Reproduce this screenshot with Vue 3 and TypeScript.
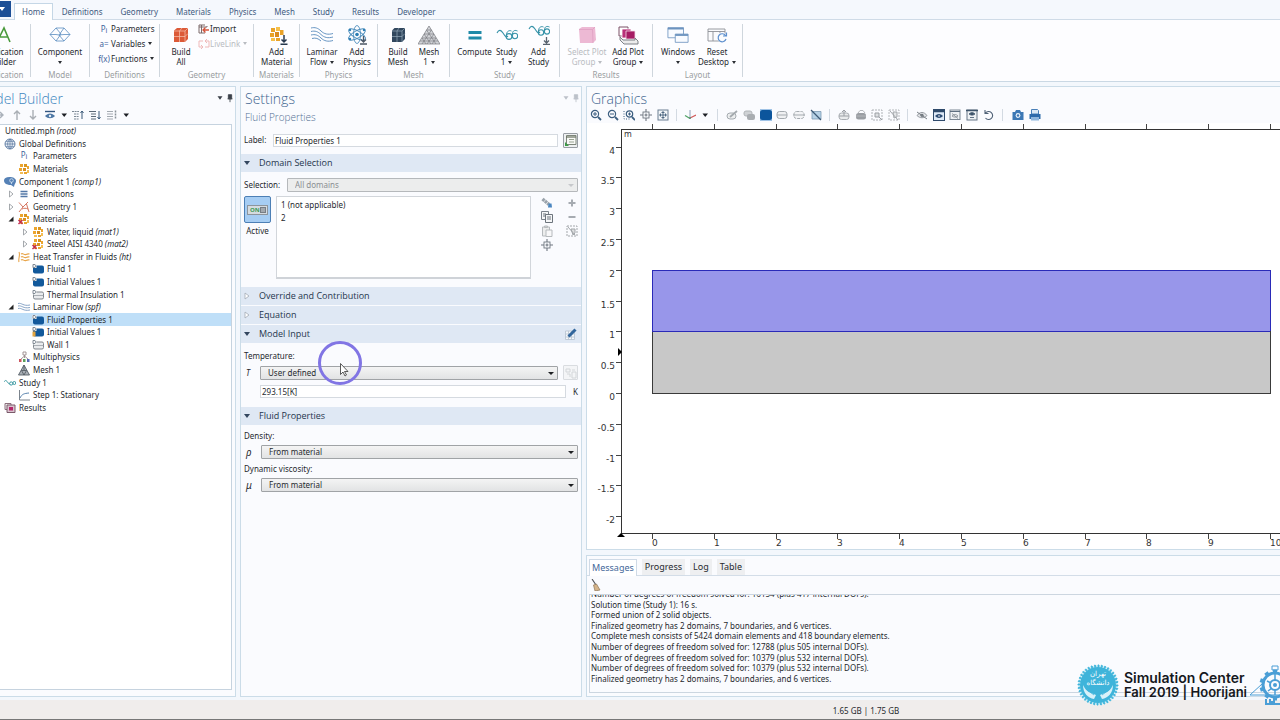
<script setup lang="ts">
import { ref } from 'vue'

interface Tool { icon: string; lines: string[]; caret?: boolean; disabled?: boolean }
interface SmallTool { icon?: string; glyph?: string; sub?: string; text: string; caret?: boolean; disabled?: boolean }
interface Group { name: string; id: string; tools: Tool[]; small?: SmallTool[] }
interface Node { level: number; icon: string; text: string; tag?: string; state?: 'open' | 'closed'; selected?: boolean }

const tabs = ['Home', 'Definitions', 'Geometry', 'Materials', 'Physics', 'Mesh', 'Study', 'Results', 'Developer']

const groups: Group[] = [
  { name: 'Application', id: 'application', tools: [{ icon: 'app', lines: ['Application', 'Builder'] }] },
  { name: 'Model', id: 'model', tools: [{ icon: 'component', lines: ['Component', ''], caret: true }] },
  {
    name: 'Definitions', id: 'definitions', tools: [],
    small: [
      { glyph: 'P', sub: 'i', text: 'Parameters' },
      { glyph: 'a=', text: 'Variables', caret: true },
      { glyph: 'f(x)', text: 'Functions', caret: true },
    ],
  },
  {
    name: 'Geometry', id: 'geometry', tools: [{ icon: 'buildall', lines: ['Build', 'All'] }],
    small: [
      { icon: 'import', text: 'Import' },
      { icon: 'livelink', text: 'LiveLink', caret: true, disabled: true },
    ],
  },
  { name: 'Materials', id: 'materials', tools: [{ icon: 'addmat', lines: ['Add', 'Material'] }] },
  {
    name: 'Physics', id: 'physics',
    tools: [{ icon: 'laminar', lines: ['Laminar', 'Flow'], caret: true }, { icon: 'addphys', lines: ['Add', 'Physics'] }],
  },
  {
    name: 'Mesh', id: 'mesh',
    tools: [{ icon: 'buildmesh', lines: ['Build', 'Mesh'] }, { icon: 'mesh', lines: ['Mesh', '1'], caret: true }],
  },
  {
    name: 'Study', id: 'study',
    tools: [
      { icon: 'compute', lines: ['Compute'] },
      { icon: 'study', lines: ['Study', '1'], caret: true },
      { icon: 'addstudy', lines: ['Add', 'Study'] },
    ],
  },
  {
    name: 'Results', id: 'results',
    tools: [
      { icon: 'selplot', lines: ['Select Plot', 'Group'], caret: true, disabled: true },
      { icon: 'addplot', lines: ['Add Plot', 'Group'], caret: true },
    ],
  },
  {
    name: 'Layout', id: 'layout',
    tools: [{ icon: 'windows', lines: ['Windows', ''], caret: true }, { icon: 'reset', lines: ['Reset', 'Desktop'], caret: true }],
  },
]

const nodes: Node[] = [
  { level: 0, icon: 'root', text: 'Untitled.mph', tag: '(root)' },
  { level: 1, icon: 'globe', text: 'Global Definitions' },
  { level: 2, icon: 'pi', text: 'Parameters' },
  { level: 2, icon: 'mat', text: 'Materials' },
  { level: 1, icon: 'comp', text: 'Component 1', tag: '(comp1)' },
  { level: 2, icon: 'defs', text: 'Definitions', state: 'closed' },
  { level: 2, icon: 'geom', text: 'Geometry 1', state: 'closed' },
  { level: 2, icon: 'matx', text: 'Materials', state: 'open' },
  { level: 3, icon: 'mat', text: 'Water, liquid', tag: '(mat1)', state: 'closed' },
  { level: 3, icon: 'matx', text: 'Steel AISI 4340', tag: '(mat2)', state: 'closed' },
  { level: 2, icon: 'heat', text: 'Heat Transfer in Fluids', tag: '(ht)', state: 'open' },
  { level: 3, icon: 'dom', text: 'Fluid 1' },
  { level: 3, icon: 'dom', text: 'Initial Values 1' },
  { level: 3, icon: 'bnd', text: 'Thermal Insulation 1' },
  { level: 2, icon: 'flow', text: 'Laminar Flow', tag: '(spf)', state: 'open' },
  { level: 3, icon: 'dom', text: 'Fluid Properties 1', selected: true },
  { level: 3, icon: 'domy', text: 'Initial Values 1' },
  { level: 3, icon: 'bnd', text: 'Wall 1' },
  { level: 2, icon: 'multi', text: 'Multiphysics' },
  { level: 2, icon: 'meshs', text: 'Mesh 1' },
  { level: 1, icon: 'studys', text: 'Study 1' },
  { level: 2, icon: 'step', text: 'Step 1: Stationary' },
  { level: 1, icon: 'results', text: 'Results' },
]

const viewTools = [
  { id: 'five', icons: ['zin', 'zout', 'zbox', 'target', 'extents'] },
  { id: 'axis', icons: ['axis', 'caret'] },
  { id: 'six', icons: ['edit', 'copies', 'domsel', 'bndsel', 'edgesel', 'nosel'] },
  { id: 'four', icons: ['cut', 'printg', 'boxsel', 'boxdes'] },
  { id: 'five', icons: ['hide', 'eyebox', 'eyewin', 'eyetop', 'resetv'] },
  { id: 'two', icons: ['camera', 'printer'] },
]

const messages = [
  'Number of degrees of freedom solved for: 16154 (plus 417 internal DOFs).',
  'Solution time (Study 1): 16 s.',
  'Formed union of 2 solid objects.',
  'Finalized geometry has 2 domains, 7 boundaries, and 6 vertices.',
  'Complete mesh consists of 5424 domain elements and 418 boundary elements.',
  'Number of degrees of freedom solved for: 12788 (plus 505 internal DOFs).',
  'Number of degrees of freedom solved for: 10379 (plus 532 internal DOFs).',
  'Number of degrees of freedom solved for: 10379 (plus 532 internal DOFs).',
  'Finalized geometry has 2 domains, 7 boundaries, and 6 vertices.',
]

const originX = 65
const originY = 270
const unit = 61.8
const xTicks = Array.from({ length: 11 }, (_, i) => ({ label: String(i), x: Math.round(originX + i * unit) }))
const yTicks = [4, 3.5, 3, 2.5, 2, 1.5, 1, 0.5, 0, -0.5, -1, -1.5, -2].map((v) => ({
  label: String(v),
  y: Math.round(originY - v * 61.6),
}))

const label = ref('Fluid Properties 1')
const temperature = ref('293.15[K]')
const petals = Array.from({ length: 36 }, (_, i) => i * 10)
const teeth = Array.from({ length: 10 }, (_, i) => i * 36)
</script>

<template>
  <svg class="defs" aria-hidden="true">
    <symbol id="i-app" viewBox="0 0 20 20"><path d="M4 17 11 3l6 14M7 12h8" fill="none" stroke="#4a9a3c" stroke-width="1.6" /></symbol>
    <symbol id="i-component" viewBox="0 0 20 20"><path d="M0 9.500 6 3h8l6 6.500-6 6.500H6zM6 3l5 6-5 7M14 3 9 10l5 6M0 9.500h6l3 .5 5-.5h6" fill="none" stroke="#5b8dc0" stroke-width=".8" /></symbol>
    <symbol id="i-buildall" viewBox="0 0 20 20"><path d="M3 5.500 6 3h11v11l-3 3H3z" fill="#dc5a38" /><path d="M3 6h11v11M14 6l3-3M8.500 6v11M3 11.500h11l3-3M8.500 6 11 3" stroke="#f7c4b2" stroke-width=".7" fill="none" /></symbol>
    <symbol id="i-import" viewBox="0 0 12 12"><path d="M7 2H1v8h6M3.500 2v8M1 4h8V3" fill="none" stroke="#7d6a6a" stroke-width="1" /><path d="M11 7H5M7.500 4.500 5 7l2.500 2.500" fill="none" stroke="#d4543c" stroke-width="1.300" /></symbol>
    <symbol id="i-livelink" viewBox="0 0 12 12"><path d="M5 3H1v6h3M3 7l2 2-2 2M7 9h4V3H8M9 1 7 3l2 2" fill="none" stroke="#efb9b9" stroke-width="1" /></symbol>
    <symbol id="i-addmat" viewBox="0 0 20 20"><g fill="#e9a227"><rect x="4" y="3" width="4" height="4" /><rect x="9" y="2" width="4" height="4" fill="#f5c04a" /><rect x="3" y="8" width="4" height="4" /><rect x="8" y="7" width="4" height="5" fill="#d98a1c" /><rect x="13" y="5" width="3.500" height="5" /><rect x="4" y="13" width="4" height="3" fill="#f5c04a" /><rect x="9" y="13" width="4" height="3" /></g><path d="M17 10v7M14.500 14.500 17 17l2.500-2.500M13.500 19.200h7" stroke="#27384d" stroke-width="1.500" fill="none" /></symbol>
    <symbol id="i-laminar" viewBox="0 0 22 20"><path d="M0 3c4-1 7 0 10 3s7 4 12 2.500M0 6.500c4-1 7 0 10 3s7 4 12 2.500M0 10c4-1 7 0 10 3s7 4 12 2.500M1 13.500c4-1 6 0 9 2.500" fill="none" stroke="#5689bb" stroke-width=".9" /></symbol>
    <symbol id="i-addphys" viewBox="0 0 20 20"><g fill="none" stroke="#4f8fbd" stroke-width=".9"><ellipse cx="10" cy="9.500" rx="9.500" ry="3.600" transform="rotate(30 10 9.500)" /><ellipse cx="10" cy="9.500" rx="9.500" ry="3.600" transform="rotate(-30 10 9.500)" /><ellipse cx="10" cy="9.500" rx="3.500" ry="9" /></g><g fill="#2b7db4"><circle cx="10" cy="9.500" r="1.800" /><circle cx="3" cy="5" r="1.200" /><circle cx="17" cy="5" r="1.200" /><circle cx="3" cy="14" r="1.200" /></g><path d="M16.500 11v6M14 14.500l2.500 2.500 2.500-2.500M13 19h7" stroke="#4c5765" stroke-width="1.300" fill="none" /></symbol>
    <symbol id="i-buildmesh" viewBox="0 0 20 20"><path d="M4 5.500 6.500 3H17v11l-3 3H4z" fill="#31475e" /><path d="M4 6h10v11M14 6l3-3M9 6v11M4 11.500h10l3-3M9 6l2-3" stroke="#93a7b8" stroke-width=".7" fill="none" /></symbol>
    <symbol id="i-mesh" viewBox="0 0 22 20"><path d="M11 1 22 19H0z" fill="#d3d5d9" stroke="#85878c" stroke-width=".8" /><path d="M8.500 5h5M6 9h10M4 13h14M2 16h18M4 13l4 6M6 9l7 10M8.500 5 18 19M18 13l-4 6M16 9 9 19M13.500 5 4 19" fill="none" stroke="#7b7d83" stroke-width=".7" /></symbol>
    <symbol id="i-compute" viewBox="0 0 20 20"><path d="M3.500 6h13v3h-13zM3.500 11.500h13v3h-13z" fill="#1f8aa8" /></symbol>
    <symbol id="i-study" viewBox="0 0 22 20"><path d="M1 8c2-4 4-3 6 0s3 5 5 3" fill="none" stroke="#3592a8" stroke-width="1.100" /><circle cx="13" cy="11.500" r="2.900" fill="none" stroke="#3592a8" stroke-width="1.100" /><circle cx="19" cy="11" r="2.700" fill="none" stroke="#3592a8" stroke-width="1.100" /><path d="M10.500 10c0-4 3-5 5-4M16.500 9c0-4 3-4 5-3" fill="none" stroke="#3592a8" stroke-width="1" /></symbol>
    <symbol id="i-addstudy" viewBox="0 0 22 20"><path d="M1 4c2-4 4-3 6 0s3 5 5 3" fill="none" stroke="#3592a8" stroke-width="1.100" /><circle cx="13" cy="7.500" r="2.700" fill="none" stroke="#3592a8" stroke-width="1.100" /><circle cx="19" cy="6.500" r="2.600" fill="none" stroke="#3592a8" stroke-width="1.100" /><path d="M10.500 6c0-4 3-5 5-4M16.500 5c0-4 3-4 5-3" fill="none" stroke="#3592a8" stroke-width="1" /><path d="M18.500 12v6M16 15.500l2.500 2.500 2.500-2.500M15 19.300h7" stroke="#59636f" stroke-width="1.300" fill="none" /></symbol>
    <symbol id="i-selplot" viewBox="0 0 20 20"><path d="M2 4 5 2h13l1 13-3 3H3z" fill="#edb9d4" /><path d="M2 4.500h13.500L16 18M15.500 4.500 18 2" stroke="#dd9cc0" stroke-width=".7" fill="none" /></symbol>
    <symbol id="i-addplot" viewBox="0 0 20 20"><path d="M1 2h9v9H1z" fill="#fff" stroke="#7a5166" /><path d="M4 4h9v9H4z" fill="#b83078" stroke="#fff" stroke-width=".8" /><path d="M8 6h9v8H8z" fill="#a61c64" stroke="#f2dbe7" stroke-width=".8" /><path d="M2 12l3 3h12v-2l3 3v3H6l-4-4z" fill="#ececec" stroke="#70757b" stroke-width=".9" /></symbol>
    <symbol id="i-windows" viewBox="0 0 24 20"><path d="M1 2h17v11H1z" fill="#f8fbff" stroke="#6c93bf" stroke-width=".9" /><path d="M1 3h17" stroke="#6c93bf" stroke-width="2" /><path d="M9 9h14v9H9z" fill="#f8fbff" stroke="#6c93bf" stroke-width=".9" /><path d="M9 10h14" stroke="#6c93bf" stroke-width="2" /></symbol>
    <symbol id="i-reset" viewBox="0 0 20 20"><path d="M1 4h17v12H1zM1 6.500h17M6 6.500V16M13 16V6" fill="#fbfbfd" stroke="#8d9096" stroke-width=".9" /><circle cx="15" cy="12.500" r="5" fill="#fbfcfe" /><path d="M18.500 10.500a4 4 0 1 0 .5 3.500M19.500 7.500v3.500H16" fill="none" stroke="#5d8fce" stroke-width="1.200" /></symbol>

    <symbol id="i-root" viewBox="0 0 12 12"><path d="M6 2l4 4-4 4-4-4z" fill="#3f6da5" /></symbol>
    <symbol id="i-globe" viewBox="0 0 12 12"><circle cx="6" cy="6" r="5" fill="#edf2f8" stroke="#57779f" stroke-width=".9" /><path d="M1 6h10M2 3.300h8M2 8.700h8M6 1v10M6 1C2.800 4 2.800 8 6 11M6 1c3.200 3 3.200 7 0 10" fill="none" stroke="#57779f" stroke-width=".7" /></symbol>
    <symbol id="i-mat" viewBox="0 0 12 12"><g fill="#eba52e"><rect x="2" y="1" width="3" height="3" /><rect x="6" y="1" width="3" height="3" fill="#d9951f" /><rect x="9" y="3" width="2" height="3" /><rect x="1" y="5" width="3" height="3" /><rect x="5" y="5" width="3" height="3" fill="#d98f1e" /><rect x="2" y="9" width="3" height="2" fill="#f3bd55" /><rect x="6" y="9" width="3" height="2" /><rect x="9" y="7" width="2" height="3" fill="#f3bd55" /></g></symbol>
    <symbol id="i-matx" viewBox="0 0 12 12"><use href="#i-mat" /><path d="M.5 7l4 4M4.500 7l-4 4" stroke="#c2284c" stroke-width="1.400" /></symbol>
    <symbol id="i-comp" viewBox="0 0 12 12"><path d="M0 4.500c0-2 2-3.500 5.500-3.500S12 2.500 12 5s-2 3-2 6L7 9C3 9 0 7.500 0 4.500z" fill="#5581b6" /><circle cx="7.500" cy="4.500" r="1.800" fill="none" stroke="#d6e4f3" stroke-width=".8" /><path d="M7.500 6v2" stroke="#d6e4f3" stroke-width=".8" /></symbol>
    <symbol id="i-defs" viewBox="0 0 12 12"><path d="M2.500 3.500h7M2.500 6h7M2.500 8.500h7" stroke="#5479a8" stroke-width="1.300" /></symbol>
    <symbol id="i-geom" viewBox="0 0 12 12"><path d="M1 1.500 5 6l5-5M5 6l-4 5M4 8c2-1 4-1 6 0M8.500 3l2.500 8" fill="none" stroke="#d0674f" stroke-width=".9" /></symbol>
    <symbol id="i-heat" viewBox="0 0 12 12"><path d="M1 1c1.500 3-1 7 0 10M3 3c2-1.500 3 1.500 5 .5s2-1 3.500-.5M3 6c2-1.500 3 1.500 5 .5s2-1 3.500-.5M3 9c2-1.500 3 1.500 5 .5s2-1 3.500-.5" fill="none" stroke="#e8a54a" stroke-width="1.100" /></symbol>
    <symbol id="i-dom" viewBox="0 0 12 12"><rect x="1" y="2.500" width="11" height="8" rx="2" fill="#12599b" /><rect x="0" y="1" width="4.500" height="4" fill="#f3f5f7" /><path d="M1 1.500h2l1 1.500-1 1.500H1z" fill="none" stroke="#6a7580" stroke-width=".8" /></symbol>
    <symbol id="i-domy" viewBox="0 0 12 12"><use href="#i-dom" /><path d="M.5 5.500h3v5h-3z" fill="#e2a540" /></symbol>
    <symbol id="i-bnd" viewBox="0 0 12 12"><rect x="1.500" y="3" width="10" height="7" rx="1.500" fill="#e9ebed" stroke="#80868d" /><path d="M1.500 6.500h10" stroke="#9aa0a6" stroke-width=".8" /><rect x="0" y="1" width="4.500" height="4.500" fill="#f8f9fa" /><path d="M1 1.500h2l1 1.500-1 1.500H1z" fill="none" stroke="#6a7580" stroke-width=".8" /></symbol>
    <symbol id="i-flow" viewBox="0 0 12 12"><path d="M0 2.500c4-1 5 3 12 1.500M0 5c4-1 5 3 12 1.500M0 7.500c4-1 5 3 12 1.500" fill="none" stroke="#7b9ac0" stroke-width=".9" /></symbol>
    <symbol id="i-multi" viewBox="0 0 12 12"><path d="M5 1h3v3H5zM6.500 4v3M6.500 5 3 8M6.500 5l3.500 3" fill="none" stroke="#9a8a8a" stroke-width=".9" /><path d="M1 8h2.500v3H1z" fill="#cc5560" /><path d="M5 8h2.500v3H5z" fill="#5aa05a" /><path d="M9 8h2.500v3H9z" fill="#5569b4" /></symbol>
    <symbol id="i-meshs" viewBox="0 0 12 12"><path d="M6 1l5.500 10H.5z" fill="#a9afb6" stroke="#555d66" stroke-width=".9" /><path d="M3.500 6.500h5L6 11zM6 1v5" fill="none" stroke="#4a525b" stroke-width=".8" /></symbol>
    <symbol id="i-studys" viewBox="0 0 12 12"><path d="M0 5c1-2 2-2 3.500 0S5 7.500 6 6.500" fill="none" stroke="#3e9ba3" /><circle cx="7.200" cy="6.500" r="1.600" fill="none" stroke="#3e9ba3" /><circle cx="10.300" cy="6" r="1.500" fill="none" stroke="#3e9ba3" /></symbol>
    <symbol id="i-step" viewBox="0 0 12 12"><path d="M1.500 1v10H12" fill="none" stroke="#7c848c" /><path d="M2 9c2-4 4-4.500 9-5" fill="none" stroke="#5580ac" /></symbol>
    <symbol id="i-results" viewBox="0 0 12 12"><path d="M1 1.500h6v6H1z" fill="#eee" stroke="#8a6f7c" /><path d="M3 3h8v7.500H3z" fill="#d9c3ce" stroke="#7a5a6a" /><path d="M5 5h4v3.500H5z" fill="#b3276b" /></symbol>

    <symbol id="i-zin" viewBox="0 0 12 12"><circle cx="5" cy="5" r="3.600" fill="none" stroke="#3d5f80" stroke-width="1.200" /><path d="M8 8l3 3" stroke="#3d5f80" stroke-width="1.800" /><path d="M3 5h4M5 3v4" stroke="#3d5f80" /></symbol>
    <symbol id="i-zout" viewBox="0 0 12 12"><circle cx="5" cy="5" r="3.600" fill="none" stroke="#3d5f80" stroke-width="1.200" /><path d="M8 8l3 3" stroke="#3d5f80" stroke-width="1.800" /><path d="M3 5h4" stroke="#3d5f80" /></symbol>
    <symbol id="i-zbox" viewBox="0 0 12 12"><path d="M1 2v8h6" fill="none" stroke="#3d5f80" stroke-dasharray="1 1.500" /><circle cx="6.500" cy="5" r="3.200" fill="none" stroke="#3d5f80" stroke-width="1.200" /><path d="M9 8l3 3" stroke="#3d5f80" stroke-width="1.800" /><path d="M5 5h3M6.500 3.500v3" stroke="#3d5f80" /></symbol>
    <symbol id="i-target" viewBox="0 0 12 12"><rect x="3" y="3" width="6" height="6" fill="none" stroke="#6f7780" stroke-width=".9" /><path d="M6 0v3M6 9v3M0 6h3M9 6h3M4.500 6h3M6 4.500v3" stroke="#6f7780" stroke-width="1.100" /></symbol>
    <symbol id="i-extents" viewBox="0 0 12 12"><rect x="1" y="1" width="10" height="10" fill="#f3f6f9" stroke="#6b7f92" /><path d="M6 2v8M2 6h8M4.500 3.500h3M4.500 8.500h3M3.500 4.500v3M8.500 4.500v3" stroke="#46617a" stroke-width=".9" /></symbol>
    <symbol id="i-axis" viewBox="0 0 12 12"><path d="M6 8V1" stroke="#8fa0b8" /><path d="M6 9l6-3" stroke="#d25a5a" stroke-width="1.200" /><path d="M6 9.500 1 6.500" stroke="#4fa365" stroke-width="1.200" /><circle cx="6" cy="9" r="1" fill="#5c8a70" /></symbol>
    <symbol id="i-caret" viewBox="0 0 12 12"><path d="M3.500 4.500h5.500L6.200 8z" fill="#1c1f24" /></symbol>
    <symbol id="i-edit" viewBox="0 0 12 12"><rect x="1" y="4" width="9" height="6" rx="3" fill="#eceeef" stroke="#a5abb0" /><path d="M4 8 11 2" stroke="#a3a9ae" stroke-width="1.800" /></symbol>
    <symbol id="i-copies" viewBox="0 0 12 12"><rect x="1" y="2" width="8" height="5" rx="2" fill="#cfd2d5" stroke="#b0b4b8" /><rect x="4" y="5" width="8" height="6" rx="2" fill="#a9adb1" /></symbol>
    <symbol id="i-domsel" viewBox="0 0 12 12"><rect x="0" y="0" width="12" height="12" fill="#9fc3e6" /><rect x="0" y="1" width="12" height="10" rx="2.500" fill="#0c559c" /></symbol>
    <symbol id="i-bndsel" viewBox="0 0 12 12"><rect x="1" y="2.500" width="10" height="7" rx="2.500" fill="#eff0f2" stroke="#a5abb0" /><path d="M1 6h10" stroke="#a5abb0" /></symbol>
    <symbol id="i-edgesel" viewBox="0 0 12 12"><rect x="1" y="2.500" width="10" height="7" rx="2.500" fill="#f3f4f6" stroke="#a5abb0" stroke-dasharray="3 1" /><path d="M0 6h12" stroke="#a5abb0" /></symbol>
    <symbol id="i-nosel" viewBox="0 0 12 12"><path d="M2 2.500h9v7.500H2z" fill="#b7d2e6" stroke="#7c9bb3" stroke-width=".8" /><path d="M1 1l10 10" stroke="#3d5a76" stroke-width="1.200" /></symbol>
    <symbol id="i-cut" viewBox="0 0 12 12"><rect x="1" y="4" width="10" height="6.500" rx="2.500" fill="#e9ebec" stroke="#a9adb2" /><path d="M6 7V1M4 3l2-2 2 2M1 7h10" fill="none" stroke="#9b9fa4" /></symbol>
    <symbol id="i-printg" viewBox="0 0 12 12"><rect x="1" y="4" width="10" height="6.500" rx="2.500" fill="#9a9ea3" /><path d="M3 4l2-2.500h3L10 4M1 7h10" fill="none" stroke="#b4b7bb" /></symbol>
    <symbol id="i-boxsel" viewBox="0 0 12 12"><rect x="1" y="1" width="10" height="10" fill="none" stroke="#aeb2b6" stroke-dasharray="2 1" /><path d="M4 4h4v4H4zM8 8l3 3" fill="#dcdfe1" stroke="#9b9fa4" /></symbol>
    <symbol id="i-boxdes" viewBox="0 0 12 12"><rect x="1" y="1" width="10" height="10" fill="none" stroke="#b5b8bc" stroke-dasharray="2 1" /><path d="M2 2l8 9M5 3h4v5L6 9z" fill="#e3e5e7" stroke="#a4a8ac" /></symbol>
    <symbol id="i-hide" viewBox="0 0 12 12"><path d="M1 6.500c3-4 7-4 10 0-3 3-7 3-10 0z" fill="#e3e5e8" stroke="#8a9096" stroke-width=".9" /><circle cx="6" cy="6.300" r="1.600" fill="#6f767d" /><path d="M1 3l10 7" stroke="#7b8188" /></symbol>
    <symbol id="i-eyebox" viewBox="0 0 12 12"><rect x=".5" y=".5" width="11" height="11" fill="#dfeaf7" stroke="#2f4a6b" /><path d="M0 2h12" stroke="#2f4a6b" stroke-width="2.500" /><path d="M2 7c2.500-2.800 5.500-2.800 8 0-2.500 2.500-5.500 2.500-8 0z" fill="#2b4a72" /><circle cx="6" cy="7" r=".8" fill="#fff" /></symbol>
    <symbol id="i-eyewin" viewBox="0 0 12 12"><rect x="1" y="1" width="10" height="9.500" fill="#eef1f4" stroke="#7b8793" /><path d="M1 2.500h10" stroke="#5f6f80" /><path d="M3 4.500l6 5M3 7c2-2 4-2 6 0-2 1.500-4 1.500-6 0z" fill="none" stroke="#7d858d" stroke-width=".8" /></symbol>
    <symbol id="i-eyetop" viewBox="0 0 12 12"><rect x="1" y="1" width="10" height="10" fill="#eef1f4" stroke="#667686" /><path d="M0 1.500h12" stroke="#3e546b" stroke-width="1.500" /><path d="M3 5c2-2 4-2 6 0-2 1.500-4 1.500-6 0zM4 8.500h4" fill="#3e546b" stroke="#3e546b" stroke-width=".8" /></symbol>
    <symbol id="i-resetv" viewBox="0 0 12 12"><path d="M2.500 4a4 4 0 1 1 0 5M2 1v3.500h3.500" fill="none" stroke="#4f6176" stroke-width="1.100" /></symbol>
    <symbol id="i-camera" viewBox="0 0 12 12"><path d="M.5 3H3l1-2h4l1 2h2.500v8H.5z" fill="#3c78b5" /><circle cx="6" cy="6.500" r="2.400" fill="#e8f1fa" /><circle cx="6" cy="6.500" r="1.200" fill="#3c78b5" /></symbol>
    <symbol id="i-printer" viewBox="0 0 12 12"><path d="M2.500.5h6l1 1V5h-7z" fill="#dce9f6" stroke="#4a80b8" /><path d="M.5 5h11v5H.5z" fill="#2d6aab" /><path d="M2 8h8v3.500H2z" fill="#8fb6dd" /></symbol>

    <symbol id="i-right" viewBox="0 0 12 12"><path d="M0 6h9M6 3l3 3-3 3" fill="none" stroke="#aab1ba" stroke-width="1.400" /></symbol>
    <symbol id="i-up" viewBox="0 0 12 12"><path d="M6 11V2M3 5l3-3 3 3" fill="none" stroke="#a9aeb4" stroke-width="1.400" /></symbol>
    <symbol id="i-down" viewBox="0 0 12 12"><path d="M6 1v9M3 7l3 3 3-3" fill="none" stroke="#a9aeb4" stroke-width="1.400" /></symbol>
    <symbol id="i-eye" viewBox="0 0 12 12"><path d="M1 2.500h10" stroke="#31557f" stroke-width="1.400" /><path d="M1 7c3-3.500 7-3.500 10 0-3 3-7 3-10 0z" fill="#4d77a5" /><circle cx="6" cy="7" r="1.200" fill="#e6eef6" /></symbol>
    <symbol id="i-coll" viewBox="0 0 12 12"><path d="M0 2.500h7M2 5h5M2 7.500h5M2 10h5" stroke="#7d8995" stroke-width="1.200" stroke-dasharray="2 .6" /><path d="M10 10V2M8.500 4 10 2l1.500 2" fill="none" stroke="#3a5878" /></symbol>
    <symbol id="i-exp" viewBox="0 0 12 12"><path d="M0 2.500h7M2 5h5M2 7.500h5M2 10h5" stroke="#5d6a77" stroke-width="1.200" /><path d="M10 2v8M8.500 8l1.500 2 1.500-2" fill="none" stroke="#3a5878" /></symbol>
    <symbol id="i-list" viewBox="0 0 12 12"><path d="M1 2.500h6M1 5h6M1 7.500h6M1 10h6" stroke="#a3aab1" stroke-width="1.200" /><path d="M9.500 1.500v9" stroke="#8a9299" stroke-dasharray="2 1" stroke-width="1.500" /></symbol>
    <symbol id="i-pin" viewBox="0 0 12 12"><path d="M4 2h4v5H4zM3 7h6M6 7v4" fill="currentColor" stroke="currentColor" /></symbol>
    <symbol id="i-tri" viewBox="0 0 12 12"><path d="M3 4h6L6 8z" fill="currentColor" /></symbol>

    <symbol id="i-window" viewBox="0 0 12 12"><path d="M1.500 1.500H11v9H1.500z" fill="#f8f9f6" stroke="#7d857a" /><path d="M1 3h10" stroke="#68705f" stroke-width="1.200" /><path d="M4 5.500h5M4 8h5" stroke="#9aa392" /><path d="M0 12V8l4 4z" fill="#3b9a45" /></symbol>
    <symbol id="i-create" viewBox="0 0 12 12"><path d="M1.500 2 8 7.500" stroke="#9aa3ab" stroke-width="3.400" stroke-dasharray="2.600 .6" /><path d="M7.500 6.500h3l.5 4H7z" fill="#4a86c0" /></symbol>
    <symbol id="i-copy" viewBox="0 0 12 12"><path d="M.5.5h7v8h-7z" fill="#f6f7f8" stroke="#7b828a" /><path d="M4.500 3.500h7v8h-7z" fill="#f6f7f8" stroke="#6c747c" /><path d="M2 3h3M6 6h4M6 8h4M2 5h2" stroke="#6c747c" /></symbol>
    <symbol id="i-paste" viewBox="0 0 12 12"><path d="M1.500 2h7v9h-7zM3.500 1h3v1.500h-3z" fill="#eceded" stroke="#b6babd" /><path d="M5 5h6v6.500H5z" fill="#f8f8f9" stroke="#b6babd" /></symbol>
    <symbol id="i-plus" viewBox="0 0 12 12"><path d="M6 2.500v7M2.500 6h7" stroke="#a6abb1" stroke-width="2" /></symbol>
    <symbol id="i-minus" viewBox="0 0 12 12"><path d="M2.500 6h7" stroke="#a6abb1" stroke-width="2" /></symbol>
    <symbol id="i-clear" viewBox="0 0 12 12"><rect x="1" y="1" width="10" height="10" fill="none" stroke="#a3a7ab" stroke-dasharray="2 1" /><path d="M2 2l7 8M5 4h4v4l-2 2z" fill="#dcdedf" stroke="#a3a7ab" /></symbol>
    <symbol id="i-pencil" viewBox="0 0 12 12"><path d="M.5 3h9v8.500h-9zM.5 6h9M3.500 3v8.500M6.500 3v8.500M.5 9h9" fill="#f4f7fa" stroke="#b5c2cf" stroke-width=".8" /><path d="M3.500 8.500 10.500 1.500" stroke="#32669c" stroke-width="3" /></symbol>
    <symbol id="i-link" viewBox="0 0 12 12"><path d="M1 2h4v3H1zM7 5h4v6H7zM2 7h3v3M7 3h3" fill="none" stroke="#d3d6d9" /></symbol>
    <symbol id="i-broom" viewBox="0 0 12 12"><path d="M2 0l4 6" stroke="#4b4f55" stroke-width="1.100" /><path d="M3.500 6l3-1 3.500 6-5 1z" fill="#d5b48a" stroke="#8c7454" stroke-width=".7" /></symbol>
  </svg>

  <div class="app">
    <nav class="tabs">
      <button class="file" aria-label="File"><svg><use href="#i-tri" /></svg></button>
      <button v-for="(t, i) in tabs" :key="t" class="tab" :class="{ active: i === 0 }">{{ t }}</button>
    </nav>

    <header class="ribbon">
      <section v-for="g in groups" :key="g.id" class="group" :class="g.id">
        <div class="items">
          <button v-for="t in g.tools" :key="t.icon" class="tool" :class="{ off: t.disabled }">
            <svg><use :href="'#i-' + t.icon" /></svg>
            <span v-for="(l, k) in t.lines" :key="k" class="line">
              {{ l }}<i v-if="t.caret && k === t.lines.length - 1" class="caret" :class="{ spaced: l }"></i>
            </span>
          </button>
          <div v-if="g.small" class="small">
            <button v-for="s in g.small" :key="s.text" class="mini" :class="{ off: s.disabled }">
              <svg v-if="s.icon"><use :href="'#i-' + s.icon" /></svg>
              <span v-else class="glyph" :class="{ fn: s.glyph === 'f(x)' }">{{ s.glyph }}<sub v-if="s.sub">{{ s.sub }}</sub></span>
              {{ s.text }}<i v-if="s.caret" class="caret spaced"></i>
            </button>
          </div>
        </div>
        <h3>{{ g.name }}</h3>
      </section>
    </header>

    <main class="workspace">
      <section class="panel builder">
        <div class="head">
          <h2><span>Model Builder</span></h2>
          <div class="pins">
            <svg><use href="#i-tri" /></svg><svg><use href="#i-pin" /></svg>
          </div>
        </div>
        <div class="bar">
          <div class="set move">
            <button v-for="n in ['right', 'up', 'down', 'eye']" :key="n" :aria-label="n"><svg><use :href="'#i-' + n" /></svg></button>
          </div>
          <button class="drop" aria-label="Show"><svg><use href="#i-caret" /></svg></button>
          <div class="set fold">
            <button v-for="n in ['coll', 'exp', 'list']" :key="n" :aria-label="n"><svg><use :href="'#i-' + n" /></svg></button>
          </div>
          <button class="drop" aria-label="More"><svg><use href="#i-caret" /></svg></button>
        </div>
        <div class="treebox">
          <ul class="tree">
            <li v-for="(n, i) in nodes" :key="i" :class="['lv' + n.level, { selected: n.selected }]">
              <span class="twist">
                <svg v-if="n.state" viewBox="0 0 8 8">
                  <path v-if="n.state === 'open'" d="M6.500 1.500v5h-5z" fill="#222" />
                  <path v-else d="M2.500 1 6 4 2.500 7z" fill="#fff" stroke="#8f9499" stroke-width=".8" />
                </svg>
              </span>
              <span v-if="n.icon === 'pi'" class="ico glyph">P<sub>i</sub></span>
              <svg v-else class="ico"><use :href="'#i-' + n.icon" /></svg>
              <span>{{ n.text }} <em v-if="n.tag">{{ n.tag }}</em></span>
            </li>
          </ul>
        </div>
      </section>

      <section class="panel settings">
        <div class="head">
          <h2>Settings</h2>
          <div class="pins faint">
            <svg><use href="#i-tri" /></svg><svg><use href="#i-pin" /></svg>
          </div>
        </div>
        <p class="sub">Fluid Properties</p>
        <div class="row labelrow">
          <label for="f-label">Label:</label>
          <input id="f-label" v-model="label" type="text" />
          <button class="sq" aria-label="Rename"><svg><use href="#i-window" /></svg></button>
        </div>

        <button class="sec"><svg><use href="#i-tri" /></svg>Domain Selection</button>
        <div class="body domain">
          <div class="row">
            <label for="f-sel">Selection:</label>
            <div class="pick off"><select id="f-sel" disabled><option>All domains</option></select></div>
          </div>
          <div class="domgrid">
            <div class="onoff">
              <button aria-label="Active"><span class="switch">ON<i></i></span></button>
              <span>Active</span>
            </div>
            <ul class="list"><li>1 (not applicable)</li><li>2</li></ul>
            <div class="ops">
              <button v-for="n in ['create', 'plus', 'copy', 'minus', 'paste', 'clear', 'target']" :key="n" :aria-label="n"><svg><use :href="'#i-' + n" /></svg></button>
            </div>
          </div>
        </div>

        <button class="sec shut"><svg viewBox="0 0 12 12"><path d="M4 3l4 3-4 3z" fill="#fff" stroke="#a3abb5" stroke-width=".8" /></svg>Override and Contribution</button>
        <button class="sec shut"><svg viewBox="0 0 12 12"><path d="M4 3l4 3-4 3z" fill="#fff" stroke="#a3abb5" stroke-width=".8" /></svg>Equation</button>
        <button class="sec"><svg><use href="#i-tri" /></svg>Model Input<svg class="pencil"><use href="#i-pencil" /></svg></button>
        <div class="body input">
          <label for="f-temp">Temperature:</label>
          <div class="row">
            <span class="sym">T</span>
            <div class="pick"><select id="f-temp"><option>User defined</option></select></div>
            <button class="sq dim" aria-label="Go to source"><svg><use href="#i-link" /></svg></button>
          </div>
          <div class="row val">
            <span class="sym"></span>
            <input v-model="temperature" type="text" aria-label="Temperature value" />
            <span class="unit">K</span>
          </div>
        </div>

        <button class="sec"><svg><use href="#i-tri" /></svg>Fluid Properties</button>
        <div class="body props">
          <label for="f-rho">Density:</label>
          <div class="row">
            <span class="sym greek">ρ</span>
            <div class="pick"><select id="f-rho"><option>From material</option></select></div>
          </div>
          <label for="f-mu">Dynamic viscosity:</label>
          <div class="row">
            <span class="sym greek">μ</span>
            <div class="pick"><select id="f-mu"><option>From material</option></select></div>
          </div>
        </div>
      </section>

      <div class="right">
        <section class="panel graphics">
          <div class="head"><h2>Graphics</h2></div>
          <div class="bar">
            <div v-for="(s, i) in viewTools" :key="i" class="set" :class="s.id">
              <button v-for="n in s.icons" :key="n" :aria-label="n"><svg><use :href="'#i-' + n" /></svg></button>
            </div>
          </div>
          <svg class="plot" role="img" aria-label="Geometry plot">
            <g shape-rendering="crispEdges">
              <rect x="65" y="147" width="618" height="61" fill="#9896ea" stroke="#2a2ab8" />
              <rect x="65" y="208" width="618" height="62" fill="#c8c8c8" stroke="#3a3a3a" />
              <path d="M65 208.500h618" stroke="#2a2ab8" />
              <path d="M34.500 411V6.500H2000M34 410.500H2000" fill="none" stroke="#333" />
              <path v-for="t in xTicks" :key="'x' + t.x" :d="`M${t.x} 1v5M${t.x} 411v5`" stroke="#444" />
              <path v-for="t in yTicks" :key="'y' + t.y" :d="`M29 ${t.y}h5`" stroke="#444" />
            </g>
            <path d="M31 225v8l4-4zM30 414h8l-4-4z" fill="#000" />
            <text x="37" y="14" class="axisunit">m</text>
            <text v-for="t in xTicks" :key="'a' + t.x" :x="t.x" y="423">{{ t.label }}</text>
            <text v-for="t in yTicks" :key="'b' + t.y" x="28" :y="t.y + 7" text-anchor="end">{{ t.label }}</text>
          </svg>
        </section>

        <section class="panel messages">
          <nav class="mtabs">
            <button class="active">Messages</button><button>Progress</button><button>Log</button><button>Table</button>
          </nav>
          <div class="mbar"><button aria-label="Clear"><svg><use href="#i-broom" /></svg></button></div>
          <div class="log">
            <div class="loglines"><p v-for="(m, i) in messages" :key="i">{{ m }}</p></div>
          </div>
        </section>
      </div>
    </main>

    <footer class="status">1.65 GB | 1.75 GB</footer>

    <svg class="pointer" viewBox="0 0 46 46" aria-hidden="true">
      <circle cx="23" cy="23" r="20.500" fill="none" stroke="#8175e4" stroke-width="3" />
      <path d="M23.500 23.500v11l2.500-2.500 2 4 1.500-1-2-3.500h3.500z" fill="#fff" stroke="#333" stroke-width=".8" />
    </svg>

    <div class="brand">
      <svg class="seal" viewBox="0 0 42 42">
        <circle cx="21" cy="21" r="20" fill="#d4f0f8" />
        <circle cx="21" cy="21" r="18" fill="#3fb4da" />
        <path v-for="a in petals" :key="a" d="M21 .8a1.200 1.200 0 0 1 0 2.400z" fill="#3fb4da" stroke="#3fb4da" stroke-width=".8" :transform="`rotate(${a} 21 21)`" />
        <text x="21" y="12" text-anchor="middle" class="fa">تهران</text>
        <text x="21" y="21" text-anchor="middle" class="fa">دانشگاه</text>
        <path d="M6 21c3 7 8 8 13 10l-2 4C11 34 6 29 6 21zM36 21c-3 7-8 8-13 10l2 4c6-1 11-6 11-14z" fill="#d8f1f9" />
        <path d="M9 25l8 6M33 25l-8 6M12 24l6 5M30 24l-6 5" stroke="#3fb4da" stroke-width=".8" />
      </svg>
      <p>Simulation Center<span>Fall 2019 | Hoorijani</span></p>
      <svg class="gear" viewBox="0 0 30 42">
        <g fill="none" stroke="#4a9ed6">
          <circle cx="25" cy="21" r="12" stroke-width="3" />
          <circle cx="25" cy="21" r="5" stroke-width="2" />
          <path v-for="a in teeth" :key="a" d="M25 5.500v4" stroke-width="4" :transform="`rotate(${a} 25 21)`" />
          <path d="M17 17l4 2M18 27l4-3M25 9v7M25 26v5" stroke-width="1.500" />
          <path d="M22 2h6v4h-6z" stroke-width="1" />
          <path d="M0 31h30" stroke-width="1" /><path d="M0 31 12 20" stroke-width="1" />
          <path d="M16 35v5h14M20 35v3h4v-3" stroke-width="2" />
        </g>
        <circle cx="25" cy="21" r="2" fill="#4a9ed6" />
      </svg>
    </div>
  </div>
</template>

<style>
html, body { margin: 0; background: #f5f8fc; overflow: hidden; }
</style>

<style scoped>
.defs { position: absolute; width: 0; height: 0; overflow: hidden; }
.app {
  position: relative; display: flex; flex-direction: column; height: 100vh; min-height: 560px;
  overflow: hidden; font: 8px/10px "Noto Sans", "Open Sans", sans-serif; color: #26292e; background: #f3f7fc;
}
.app *, .app *::before, .app *::after { box-sizing: border-box; }
h2, h3, p, ul { margin: 0; padding: 0; font-weight: 400; list-style: none; }
button, input, select { font: inherit; color: inherit; margin: 0; padding: 0; border: 0; background: none; border-radius: 0; }
button { cursor: pointer; }
svg { display: block; flex: none; }
em { font-style: italic; }

.tabs { display: flex; align-items: flex-end; height: 20px; flex: none; border-bottom: 1px solid #cfdbe7; background: #f5f8fd; }
.file { width: 11px; height: 16px; margin: 0 3px 2px 0; background: #1c4f96; color: #fff; overflow: hidden; }
.file svg { width: 12px; height: 12px; margin-left: -4px; }
.tab { height: 16px; padding: 0 9px; margin-right: -2px; color: #3f5b80; border: 1px solid transparent; border-bottom: 0; }
.tab.active { height: 17px; margin: 0 -1px -1px 0; padding: 0 7px; background: #fff; border-color: #c5d7e6; }

.ribbon { display: flex; flex: none; height: 62px; background: #fdfdff; border-bottom: 1px solid #cad8e4; }
.group { display: flex; flex-direction: column; flex: none; margin: 4px 0; padding-top: 1px; border-right: 1px solid #cfd6dd; }
.items { display: flex; flex: none; justify-content: center; height: 43px; }
.group h3 { margin-top: 1px; font-size: 8px; line-height: 11px; text-align: center; color: #9a9da1; }
.tool { display: flex; flex-direction: column; align-items: center; justify-content: flex-start; flex: none; white-space: nowrap; width: 40px; }
.tool svg { width: 22px; height: 20px; margin-bottom: 2px; }
.line { display: flex; align-items: center; height: 10px; }
.caret { width: 0; height: 0; border: 2px solid transparent; border-top: 3px solid #2b2e33; border-bottom: 0; }
.caret.spaced { margin-left: 3px; }
.off { color: #b9bcc1; }
.off .caret { border-top-color: #b9bcc1; }
.application { width: 56px; margin-left: -25px; }
.model { width: 59px; }
.definitions { width: 70px; }
.definitions .items { justify-content: flex-start; padding-left: 8px; }
.geometry { width: 94px; }
.geometry .items { justify-content: flex-start; padding-left: 4px; }
.geometry .tool { width: 34px; }
.materials { width: 46px; }
.physics { width: 78px; }
.physics .items { padding-left: 2px; }
.physics .tool { width: 35px; }
.mesh { width: 72px; }
.mesh .tool { width: 31px; }
.study { width: 110px; }
.study .items { padding-left: 4px; }
.study .tool { width: 32px; }
.results { width: 93px; }
.results .items { padding-left: 3px; }
.results .tool { width: 41px; }
.layout { width: 90px; }
.layout .tool { width: 39px; }
.small { display: flex; flex-direction: column; margin-top: -4px; }
.mini { display: flex; align-items: center; height: 15px; white-space: nowrap; }
.mini svg { width: 12px; height: 12px; }
.glyph { display: block; width: 12px; margin-right: 1px; color: #3f639c; line-height: 10px; text-align: center; white-space: nowrap; }
.glyph sub { font-size: 7px; line-height: 0; vertical-align: -1px; }
.fn { display: flex; justify-content: flex-end; }

.workspace { flex: 1; min-height: 0; display: grid; grid-template-columns: 236fr 342fr 694fr; gap: 4px; padding: 4px 0 3px; }
.panel { display: flex; flex-direction: column; min-width: 0; background: #fafbfe; border: 1px solid #cbdce8; overflow: hidden; }
.head { display: flex; justify-content: space-between; height: 21px; flex: none; }
.head h2 { padding-left: 4px; font: 300 14px/24px "Open Sans", "Noto Sans", sans-serif; color: #41658f; white-space: nowrap; }
.pins { display: flex; padding: 5px 0 0; color: #3b4149; }
.pins svg { width: 10px; height: 12px; padding: 1px 0; }
.faint { color: #bcc1c9; }
.builder { border-left: 0; }
.builder h2 { display: flex; justify-content: flex-end; width: 63px; padding: 0; color: #3f87c0; }
.bar { display: flex; align-items: center; height: 14px; margin-bottom: 1px; flex: none; }
.bar button { flex: 1; display: flex; justify-content: center; }
.bar svg { width: 12px; height: 12px; }
.set { display: flex; flex: none; }
.move { width: 66px; margin-left: -8px; }
.fold { width: 50px; margin-left: 1px; }
.bar .drop { flex: none; width: 11px; }
.treebox { flex: 1; margin: 1px 3px 6px 0; background: #fff; border: 1px solid #c6d3df; border-left: 0; overflow: hidden; }
.tree { display: grid; grid-auto-rows: 1fr; height: 289px; margin-left: -21px; }
.tree li { display: flex; align-items: center; white-space: nowrap; }
.lv1 { padding-left: 14px; }
.lv2 { padding-left: 28px; }
.lv3 { padding-left: 42px; }
.selected { background: #bfdff8; }
.twist { width: 8px; margin-right: 3px; }
.twist svg { width: 8px; height: 8px; }
.ico { width: 12px; height: 12px; margin-right: 3px; }

.settings .head { height: 23px; }
.sub { padding-left: 4px; font: 300 10px/14px "Open Sans", "Noto Sans", sans-serif; color: #526f94; }
.row { display: flex; align-items: center; }
.labelrow { flex: none; height: 16px; margin: 8px 3px 6px; }
.labelrow label { width: 29px; }
.row input { flex: 1; min-width: 0; height: 13px; padding: 0 1px; background: #fff; border: 1px solid #d5dae0; outline: 0; }
.sq { display: grid; place-items: center; width: 15px; height: 15px; margin-left: 5px; background: #eef0f1; border: 1px solid #989da3; border-radius: 1px; }
.sq.dim { background: #f4f5f7; border-color: #d9dce0; }
.sq svg { width: 12px; height: 12px; }
.sec { display: flex; align-items: center; flex: none; width: 100%; height: 18px; margin-bottom: 1px; padding-right: 4px; background: #dfe8f4; color: #26364d; font: 9px/12px "Open Sans", "Noto Sans", sans-serif; text-align: left; }
.sec svg { width: 12px; height: 12px; margin-right: 6px; color: #34475f; }
.sec .pencil { margin: 0 0 0 auto; }
.body { flex: none; padding: 0 3px; }
.domain { padding-top: 5px; height: 114px; }
.domain .row label { width: 43px; flex: none; }
.pick { position: relative; flex: 1; min-width: 0; }
.pick::after { content: ""; position: absolute; right: 4px; top: 6px; border: 3px solid transparent; border-top-color: #1d1f22; border-bottom: 0; }
.pick.off::after { border-top-color: #c6c8cb; }
.pick select { display: block; width: 100%; height: 14px; padding: 0 7px; appearance: none; background: linear-gradient(#f4f4f4, #e2e3e4); border: 1px solid #a0a3a6; border-radius: 1px; outline: 0; }
.pick.off select { background: #eceded; color: #8b8e92; opacity: 1; border-color: #b5b8bb; }
.domgrid { display: flex; margin-top: 4px; }
.onoff { width: 27px; text-align: center; }
.onoff button { display: grid; place-items: center; width: 27px; height: 27px; margin-bottom: 3px; background: #a6cdf3; border: 1px solid #4c7fb5; border-radius: 2px; }
.switch { display: flex; align-items: center; justify-content: space-between; width: 21px; height: 10px; padding: 0 1px 0 2px; background: #d5dbe0; border: 1px solid #8d959c; color: #3a9a55; font: 700 6px/8px "Open Sans", sans-serif; }
.switch i { width: 6px; height: 6px; background: #a2a8ae; border: 1px solid #777d84; }
.list { flex: 1; height: 83px; margin-left: 5px; padding: 1px 4px; background: #fff; border: 1px solid #d2d6db; border-bottom: 2px solid #cfd3d8; }
.list li { line-height: 13px; }
.ops { display: grid; grid-template-columns: 25px 12px; grid-auto-rows: 14px; margin-left: 10px; }
.ops svg { width: 12px; height: 12px; }
.input { padding-top: 7px; height: 63px; }
.input label, .props label { display: block; height: 11px; }
.input .row { margin-top: 3px; }
.input .val { margin-top: 5px; }
.sym { width: 16px; flex: none; padding-left: 2px; font-style: italic; }
.greek { width: 17px; font-size: 10px; }
.unit { width: 12px; text-align: right; }
.props { padding-top: 5px; }
.props .row { margin: 3px 0 5px; }

.right { display: flex; flex-direction: column; gap: 5px; min-width: 0; min-height: 0; }
.graphics { flex: 1; min-height: 0; border-right: 0; }
.graphics .set { border-right: 1px solid #d3dae2; margin-right: 6px; padding-right: 5px; }
.graphics .bar { padding-left: 1px; }
.graphics .set:last-child { border-right: 0; }
.set.five { width: 89px; }
.set.axis { width: 35px; }
.set.six { width: 106px; }
.set.four { width: 72px; }
.set.two { width: 39px; }
.plot { flex: 1; width: 100%; min-height: 0; background: #fff; font: 9px "DejaVu Sans", sans-serif; fill: #333; }
.axisunit { font-size: 8px; }
.messages { flex: none; height: 142px; border-right: 0; }
.mtabs { display: flex; gap: 5px; height: 20px; padding: 3px 0 0 2px; border-bottom: 1px solid #d3dde8; }
.mtabs button { height: 16px; padding: 0 3px; font-size: 9px; background: #eeeff1; }
.mtabs .active { height: 17px; color: #44689a; background: #fff; border: 1px solid #cfdae6; border-bottom: 0; padding: 0 2px; }
.mbar { height: 18px; padding: 3px 0 0 3px; }
.mbar svg { width: 12px; height: 12px; }
.log { flex: 1; min-height: 0; margin: 0 0 3px 2px; border: 1px solid #ccd6e0; border-right: 0; overflow: hidden; }
.loglines { display: grid; grid-auto-rows: 1fr; align-items: center; height: 95px; margin-top: -6px; padding-left: 1px; white-space: nowrap; }

.status { flex: none; height: 20px; padding-top: 6px; text-align: center; background: #f0edec; border-bottom: 1px solid #777; padding-left: 452px; }

.pointer { position: absolute; left: 317px; top: 340px; width: 46px; height: 46px; pointer-events: none; }
.brand { position: absolute; right: 0; bottom: 14px; display: flex; align-items: center; pointer-events: none; }
.brand p { margin: 0 3px 0 5px; font: 600 14px/15px Inter, sans-serif; color: #15181d; white-space: nowrap; }
.brand span { display: block; font-size: 13px; }
.seal { width: 42px; height: 42px; }
.gear { width: 30px; height: 42px; }
.fa { font: 7px "DejaVu Sans", sans-serif; fill: #fff; }
</style>
